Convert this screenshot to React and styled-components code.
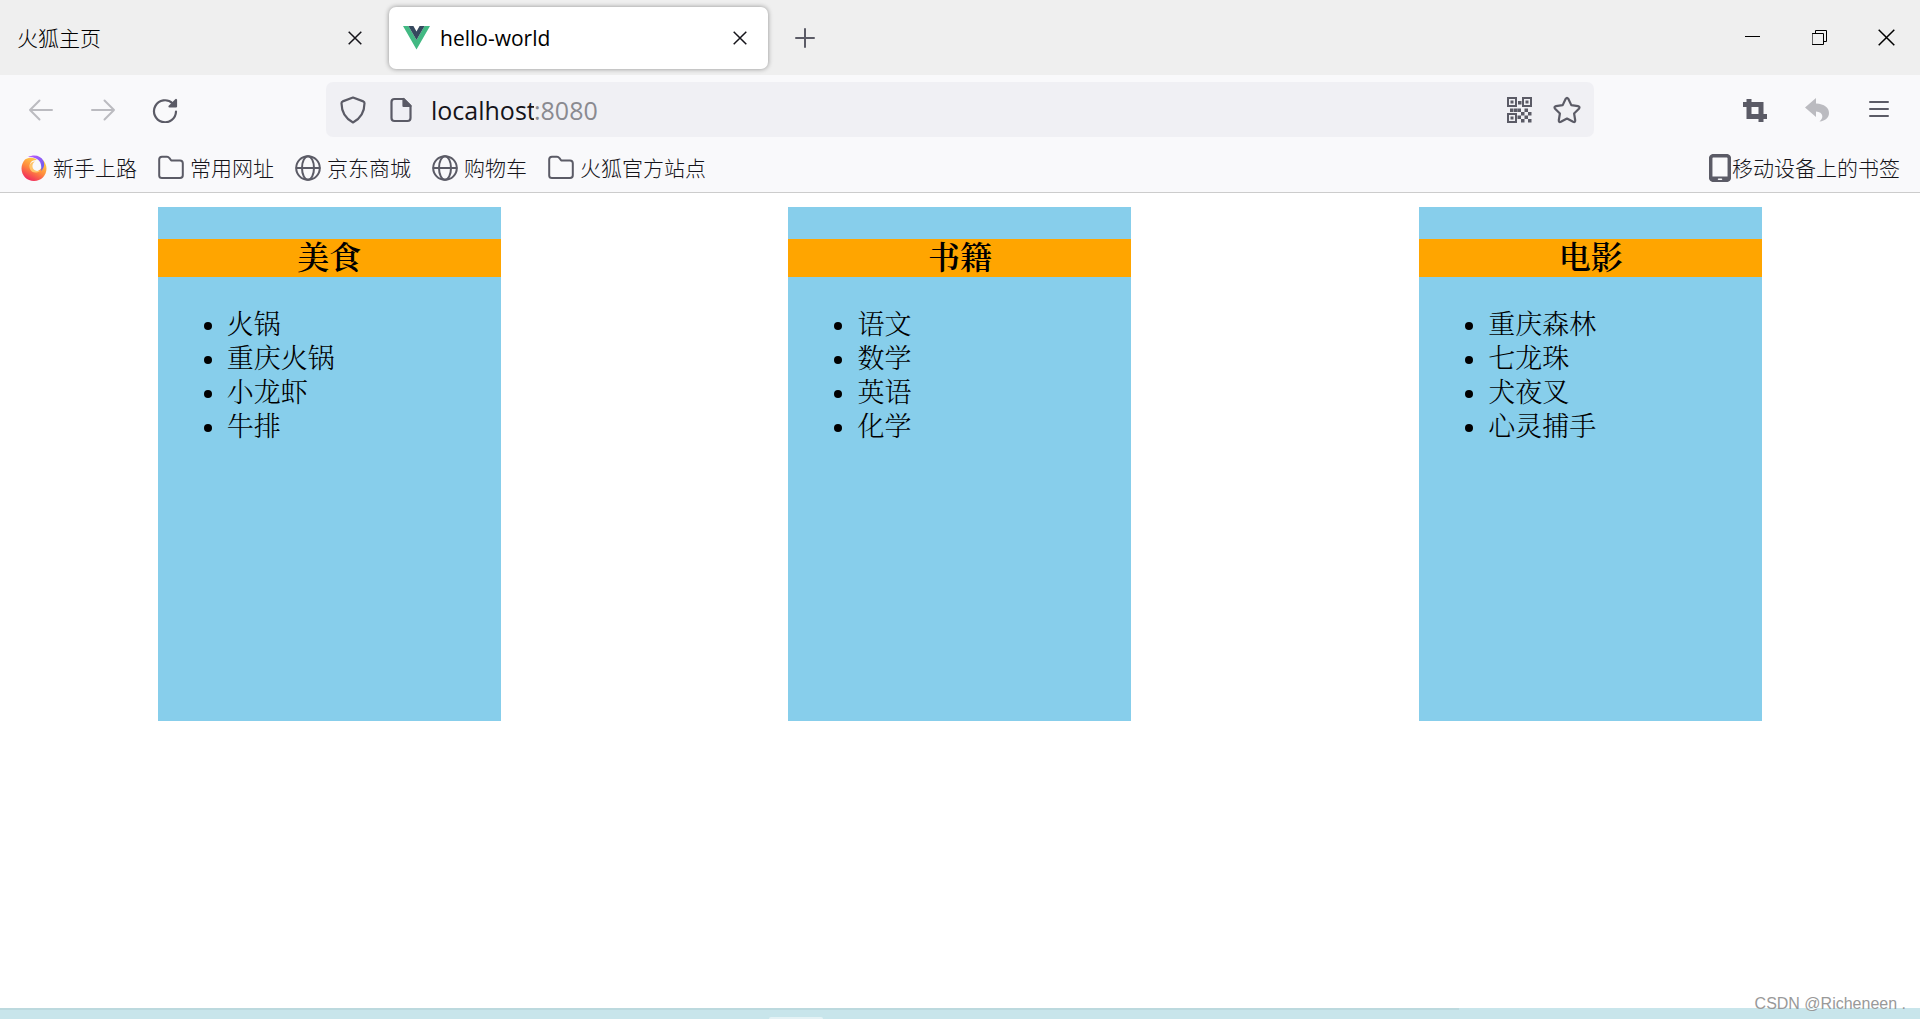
import React from 'react';
import styled, { createGlobalStyle } from 'styled-components';

const GlobalStyle = createGlobalStyle`
  html,
  body {
    margin: 0;
    padding: 0;
    background: #fff;
  }
  *,
  *::before,
  *::after {
    box-sizing: border-box;
  }
  button,
  input {
    font: inherit;
    color: inherit;
    border: 0;
    padding: 0;
    background: none;
    outline: none;
  }
`;

const Window = styled.div`
  display: flex;
  flex-direction: column;
  min-height: 100vh;
  font-family: 'Open Sans', 'Noto Sans CJK SC', sans-serif;
  font-size: 21px;
  color: #15141a;
`;

/* ////////// TAB STRIP /////////// */
const TabStrip = styled.div`
  display: flex;
  align-items: center;
  height: 75px;
  background: #efefef;
  color: #000;
`;

const Tab = styled.div`
  display: flex;
  align-items: center;
  gap: 10px;
  width: ${(props) => (props.$active ? '379px' : '389px')};
  height: 62px;
  padding: 0 ${(props) => (props.$active ? '14px' : '20px')} 0 ${(props) => (props.$active ? '14px' : '17px')};
  border-radius: 7px;
  background: ${(props) => (props.$active ? '#fff' : 'transparent')};
  box-shadow: ${(props) => (props.$active ? '0 0 5px rgba(0, 0, 0, 0.4)' : 'none')};
`;

const TabTitle = styled.span`
  flex: 1;
  font-weight: ${(props) => (props.$latin ? '400' : '300')};
  line-height: 28px;
`;

const IconButton = styled.button`
  display: flex;
  align-items: center;
  justify-content: center;
  flex: none;
  width: ${(props) => props.$width || 'auto'};
  height: ${(props) => props.$height || 'auto'};
  color: ${(props) => props.$color || '#5b5b66'};
`;

const WindowControls = styled.div`
  display: flex;
  margin-left: auto;
`;

/* ////////// NAV BAR /////////// */
const NavBar = styled.div`
  display: flex;
  align-items: center;
  height: 69px;
  padding: 0 10px;
  background: #f9f9fb;
`;

const NavGroup = styled.div`
  display: flex;
  flex: none;
`;

const UrlBar = styled.div`
  display: flex;
  align-items: center;
  flex: 1;
  height: 55px;
  margin: 0 130px;
  padding: 0 3px;
  border-radius: 7px;
  background: #f0f0f4;
`;

const UrlField = styled.label`
  flex: 1;
  display: flex;
  padding-left: 6px;
  font-size: 25px;
  line-height: 34px;
`;

const Host = styled.input`
  width: 103px;
`;

const Port = styled.input`
  flex: 1;
  min-width: 0;
  && {
    color: #8a8a90;
  }
`;

/* ////////// BOOKMARKS /////////// */
const Bookmarks = styled.nav`
  display: flex;
  align-items: center;
  gap: 21px;
  height: 49px;
  padding: 0 20px 0 21px;
  border-bottom: 1px solid #ccc;
  background: #f9f9fb;
  font-weight: 300;
`;

const Bookmark = styled.a`
  display: flex;
  align-items: center;
  gap: ${(props) => (props.$end ? '1px' : '6px')};
  margin-left: ${(props) => (props.$end ? 'auto' : '0')};
  color: inherit;
  line-height: 30px;
  text-decoration: none;
  white-space: nowrap;

  svg {
    flex: none;
    color: #5b5b66;
  }
`;

/* ////////// PAGE /////////// */
const Page = styled.main`
  display: flex;
  flex: 1;
  align-items: flex-start;
  justify-content: space-around;
  padding: 14px;
  color: #000;
  font-family: 'Liberation Serif', 'Noto Serif CJK SC', 'Noto Sans CJK SC', serif;
`;

const Card = styled.section`
  display: flow-root;
  width: 343px;
  height: 514px;
  background: skyblue;
`;

const CardTitle = styled.h3`
  margin: 32px 0 31px;
  background: orange;
  font-size: 32px;
  font-weight: 600;
  line-height: 38px;
  text-align: center;
`;

const List = styled.ul`
  margin: 0;
  padding-left: 69px;
  font-size: 27px;
  font-weight: 300;
  line-height: 34px;
`;

/* ////////// DESKTOP EDGE /////////// */
const DesktopEdge = styled.footer`
  position: relative;
  display: flex;
  justify-content: center;
  height: 11px;
  background: linear-gradient(#bcd9de, #bcd9de) 0 0 / 76% 2px no-repeat #c8e5eb;
`;

const Handle = styled.span`
  align-self: flex-end;
  width: 54px;
  height: 2px;
  margin-right: 328px;
  border-radius: 4px 4px 0 0;
  background: #e4f2f5;
`;

const Watermark = styled.span`
  position: absolute;
  right: 14px;
  bottom: 5px;
  color: #999;
  font-family: 'Liberation Sans', sans-serif;
  font-size: 16px;
  line-height: 20px;
  text-shadow: -1px -1px 0 #fff;
`;

/* ////////// ICONS /////////// */
const Icon = ({ w = 26, h = w, sw = 2, children, ...rest }) => (
  <svg
    width={w}
    height={h}
    viewBox={`0 0 ${w} ${h}`}
    fill="none"
    stroke="currentColor"
    strokeWidth={sw}
    strokeLinecap="round"
    strokeLinejoin="round"
    aria-hidden="true"
    {...rest}
  >
    {children}
  </svg>
);

const CloseIcon = ({ size = 14 }) => (
  <Icon w={size} sw={1.5} strokeLinecap="butt">
    <path d={`M.7.7 ${size - 0.7} ${size - 0.7}M${size - 0.7}.7.7 ${size - 0.7}`} />
  </Icon>
);

const VueIcon = () => (
  <svg width="27" height="24" viewBox="0 0 27 24" aria-hidden="true">
    <path fill="#42b983" d="M0 0h5.4l8.1 14L21.600 0H27L13.500 23.500z" />
    <path fill="#35495e" d="M5.400 0h5l3.100 5.400L16.600 0h5L13.500 14z" />
  </svg>
);

const BackIcon = () => (
  <Icon>
    <path d="M24 13H2M11.500 3.500 2 13l9.500 9.500" />
  </Icon>
);

const ForwardIcon = () => (
  <Icon>
    <path d="M2 13h22M14.500 3.500 24 13l-9.500 9.500" />
  </Icon>
);

const ReloadIcon = () => (
  <Icon sw={2.2}>
    <path d="M20.500 6.200A11 11 0 1 0 24 14.500" />
    <path d="M24 3V9.500H17.500z" fill="currentColor" />
  </Icon>
);

const ShieldIcon = () => (
  <Icon w={26} h={28} sw={2.2}>
    <path d="M13 1.500 23.300 5.400Q24.500 5.900 24.500 7.200C24.400 17 20.500 22.500 13 26.400 5.500 22.500 1.600 17 1.500 7.200Q1.500 5.900 2.700 5.400z" />
  </Icon>
);

const PageIcon = () => (
  <Icon w={22} h={26} sw={2.2}>
    <path d="M13.500 2H4.500Q1.500 2 1.500 5v16q0 3 3 3h13q3 0 3-3V9z" />
    <path d="M13.500 2v7h7z" fill="currentColor" />
  </Icon>
);

const StarIcon = () => (
  <Icon w={28} h={28} sw={2.2}>
    <path d="M12.700 2.800q1.300-2 2.600 0l3 6.300 6.700 1q2.500.6.900 2.600l-4.800 4.800 1.100 6.700q.2 2.500-2.100 1.600L14 22.500l-6.100 3.300q-2.300.9-2.100-1.600l1.100-6.700-4.800-4.800q-1.600-2 .9-2.600l6.700-1z" />
  </Icon>
);

const QrFinder = ({ x, y }) => (
  <>
    <rect x={x + 1} y={y + 1} width="8" height="8" />
    <rect x={x + 3.500} y={y + 3.500} width="3" height="3" fill="currentColor" stroke="none" />
  </>
);

const qrDots = [
  [11, 4], [3, 11.5], [10.5, 11.5], [17.5, 11.5], [14, 15], [21, 15],
  [10.5, 18.5], [17.5, 18.5], [14, 22], [21, 22], [7, 11.5],
];

const QrIcon = () => (
  <Icon w={25} h={26} strokeLinejoin="miter">
    <QrFinder x={0} y={0} />
    <QrFinder x={15} y={0} />
    <QrFinder x={0} y={16} />
    {qrDots.map(([x, y]) => (
      <rect key={`${x}-${y}`} x={x} y={y} width="3.500" height="3.500" fill="currentColor" stroke="none" />
    ))}
  </Icon>
);

const CropIcon = () => (
  <Icon w={24} strokeLinecap="butt" strokeLinejoin="miter" sw={5}>
    <path d="M6 1v17.500H24M0 6.500h18V25" />
  </Icon>
);

const UndoIcon = () => (
  <Icon w={25}>
    <path
      d="M11 1v5.500c8.500.5 13 4 13 9.500 0 4.500-3.500 8-9.500 8.500C19 21 18.500 15 11 14.500V20L0 10.500z"
      fill="currentColor"
      stroke="none"
    />
  </Icon>
);

const MenuIcon = () => (
  <Icon w={20} h={20}>
    <path d="M1 2h18M1 9h18M1 16h18" />
  </Icon>
);

const FirefoxIcon = () => (
  <svg width="26" height="26" viewBox="0 0 26 26" aria-hidden="true">
    <defs>
      <linearGradient id="fire" x1="0.8" y1="0.1" x2="0.3" y2="1">
        <stop offset="0" stopColor="#ffd54a" />
        <stop offset="0.5" stopColor="#ff8a3d" />
        <stop offset="1" stopColor="#f0245f" />
      </linearGradient>
      <linearGradient id="tail" x1="0" y1="0" x2="1" y2="1">
        <stop offset="0" stopColor="#c05cff" />
        <stop offset="1" stopColor="#5f5bea" />
      </linearGradient>
    </defs>
    <path fill="url(#fire)" d="M4 4.500C8 2 13 2 16 5c-5-.5-8 3-7 7 1 4 6 5.500 9.500 3C22 12 23 9 21.500 4.500 24 7 25.500 10 25.500 13.500 25.500 20.500 20 26 13 26S.5 20.500.5 13.500C.5 10 1.800 7 4 4.500z" />
    <path fill="#ffc56b" d="M14 6.500c-4.500 0-6.500 4-5 7.500 1.700 4 6.500 4.500 10 2-4 .5-7-1-7.500-4-.3-2.500.7-4.500 2.500-5.500z" />
    <path fill="url(#tail)" d="M7 2C13-1 20 .5 22.500 6c1.500 3.500.5 7-2.500 10 1-6-.5-10-4-12C13 2.300 10 2 7 2z" />
  </svg>
);

const FolderIcon = () => (
  <Icon>
    <path d="M1.200 20.500v-16Q1.200 1.700 4 1.700h5q1.500 0 2.500 1.500l1.700 2.300H22q2.800 0 2.800 2.800v12q0 2.800-2.800 2.800H4q-2.800 0-2.800-2.600z" />
  </Icon>
);

const GlobeIcon = () => (
  <Icon>
    <circle cx="13" cy="13" r="11.800" />
    <ellipse cx="13" cy="13" rx="6" ry="11.800" />
    <path d="M1.500 13h23" />
  </Icon>
);

const PhoneIcon = () => (
  <Icon w={22} h={28} sw={3.5}>
    <rect x="1.700" y="1.700" width="18.600" height="24.600" rx="2.500" />
    <path d="M3 24.500h16" strokeWidth="4" />
    <path d="M9.500 25.200h3" stroke="#f9f9fb" strokeWidth="1.500" />
  </Icon>
);

const MinimizeIcon = () => (
  <Icon w={15} sw={1} strokeLinecap="butt">
    <path d="M0 6.500h15" />
  </Icon>
);

const RestoreIcon = () => (
  <Icon w={15} sw={1} strokeLinejoin="miter">
    <path d="M.5 3.500h11v11H.5zM3.500 3.500v-3h11v11h-3" />
  </Icon>
);

const bookmarks = [
  { name: '新手上路', icon: FirefoxIcon },
  { name: '常用网址', icon: FolderIcon },
  { name: '京东商城', icon: GlobeIcon },
  { name: '购物车', icon: GlobeIcon },
  { name: '火狐官方站点', icon: FolderIcon },
];

const categories = [
  { title: '美食', items: ['火锅', '重庆火锅', '小龙虾', '牛排'] },
  { title: '书籍', items: ['语文', '数学', '英语', '化学'] },
  { title: '电影', items: ['重庆森林', '七龙珠', '犬夜叉', '心灵捕手'] },
];

const Category = ({ title, items }) => (
  <Card>
    <CardTitle>{title}</CardTitle>
    <List>
      {items.map((item) => (
        <li key={item}>{item}</li>
      ))}
    </List>
  </Card>
);

export default function App() {
  return (
    <Window>
      <GlobalStyle />
      <TabStrip>
        <Tab>
          <TabTitle>火狐主页</TabTitle>
          <IconButton $width="28px" $height="28px" $color="#15141a" aria-label="关闭标签页">
            <CloseIcon />
          </IconButton>
        </Tab>
        <Tab $active>
          <VueIcon />
          <TabTitle $latin>hello-world</TabTitle>
          <IconButton $width="28px" $height="28px" $color="#15141a" aria-label="关闭标签页">
            <CloseIcon />
          </IconButton>
        </Tab>
        <IconButton $width="74px" $height="62px" aria-label="打开新标签页">
          <Icon w={20}>
            <path d="M10 1v18M1 10h18" />
          </Icon>
        </IconButton>
        <WindowControls>
          <IconButton $width="67px" $height="75px" $color="#000" aria-label="最小化">
            <MinimizeIcon />
          </IconButton>
          <IconButton $width="67px" $height="75px" $color="#000" aria-label="还原">
            <RestoreIcon />
          </IconButton>
          <IconButton $width="67px" $height="75px" $color="#000" aria-label="关闭">
            <CloseIcon size={17} />
          </IconButton>
        </WindowControls>
      </TabStrip>

      <NavBar>
        <NavGroup>
          <IconButton $width="62px" $height="55px" $color="#bbbbc0" aria-label="后退">
            <BackIcon />
          </IconButton>
          <IconButton $width="62px" $height="55px" $color="#bbbbc0" aria-label="前进">
            <ForwardIcon />
          </IconButton>
          <IconButton $width="62px" $height="55px" aria-label="刷新">
            <ReloadIcon />
          </IconButton>
        </NavGroup>
        <UrlBar>
          <IconButton $width="48px" $height="48px" aria-label="跟踪保护">
            <ShieldIcon />
          </IconButton>
          <IconButton $width="48px" $height="48px" aria-label="网站信息">
            <PageIcon />
          </IconButton>
          <UrlField>
            <Host aria-label="主机" defaultValue="localhost" />
            <Port aria-label="端口" defaultValue=":8080" />
          </UrlField>
          <IconButton $width="48px" $height="48px" aria-label="二维码">
            <QrIcon />
          </IconButton>
          <IconButton $width="48px" $height="48px" aria-label="收藏">
            <StarIcon />
          </IconButton>
        </UrlBar>
        <NavGroup>
          <IconButton $width="62px" $height="55px" aria-label="截图">
            <CropIcon />
          </IconButton>
          <IconButton $width="62px" $height="55px" $color="#bbbbc0" aria-label="撤销">
            <UndoIcon />
          </IconButton>
          <IconButton $width="62px" $height="55px" aria-label="菜单">
            <MenuIcon />
          </IconButton>
        </NavGroup>
      </NavBar>

      <Bookmarks>
        {bookmarks.map(({ name, icon: BookmarkIcon }) => (
          <Bookmark key={name} href="#">
            <BookmarkIcon />
            {name}
          </Bookmark>
        ))}
        <Bookmark $end href="#">
          <PhoneIcon />
          移动设备上的书签
        </Bookmark>
      </Bookmarks>

      <Page>
        {categories.map((category) => (
          <Category key={category.title} {...category} />
        ))}
      </Page>

      <DesktopEdge>
        <Handle />
        <Watermark>CSDN @Richeneen .</Watermark>
      </DesktopEdge>
    </Window>
  );
}
